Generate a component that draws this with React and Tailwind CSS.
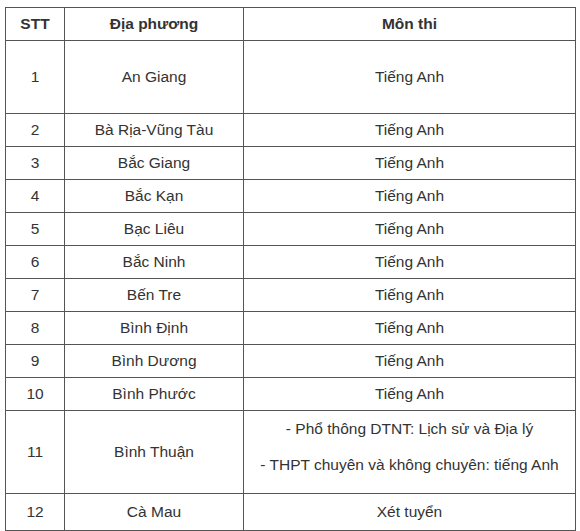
export default function App() {
  const rows = [
    ["2", "Bà Rịa-Vũng Tàu", "Tiếng Anh"],
    ["3", "Bắc Giang", "Tiếng Anh"],
    ["4", "Bắc Kạn", "Tiếng Anh"],
    ["5", "Bạc Liêu", "Tiếng Anh"],
    ["6", "Bắc Ninh", "Tiếng Anh"],
    ["7", "Bến Tre", "Tiếng Anh"],
    ["8", "Bình Định", "Tiếng Anh"],
    ["9", "Bình Dương", "Tiếng Anh"],
    ["10", "Bình Phước", "Tiếng Anh"],
  ];
  const td = "border border-[#555] text-center align-middle p-0";
  return (
    <div className="bg-white w-[580px] h-[531px] overflow-hidden pt-[7px] pl-[5px] text-[15.5px] text-[#333]" style={{ fontFamily: '"Liberation Sans", Arial, sans-serif' }}>
      <table className="border-collapse table-fixed w-[570px]">
        <colgroup>
          <col className="w-[59px]" />
          <col className="w-[179px]" />
          <col className="w-[332px]" />
        </colgroup>
        <tbody>
          <tr className="h-[33px]">
            <td className={`${td} font-bold`}>STT</td>
            <td className={`${td} font-bold`}>Địa phương</td>
            <td className={`${td} font-bold`}>Môn thi</td>
          </tr>
          <tr className="h-[73px]">
            <td className={td}>1</td>
            <td className={td}>An Giang</td>
            <td className={td}>Tiếng Anh</td>
          </tr>
          {rows.map((r) => (
            <tr key={r[0]} className="h-[33px]">
              <td className={td}>{r[0]}</td>
              <td className={td}>{r[1]}</td>
              <td className={td}>{r[2]}</td>
            </tr>
          ))}
          <tr className="h-[83px]">
            <td className={td}>11</td>
            <td className={td}>Bình Thuận</td>
            <td className={`${td} pb-[11px]`}>
              <div className="flex flex-col gap-[13px]">
                <p>- Phổ thông DTNT: Lịch sử và Địa lý</p>
                <p>- THPT chuyên và không chuyên: tiếng Anh</p>
              </div>
            </td>
          </tr>
          <tr className="h-[37px]">
            <td className={td}>12</td>
            <td className={td}>Cà Mau</td>
            <td className={td}>Xét tuyển</td>
          </tr>
        </tbody>
      </table>
    </div>
  );
}
